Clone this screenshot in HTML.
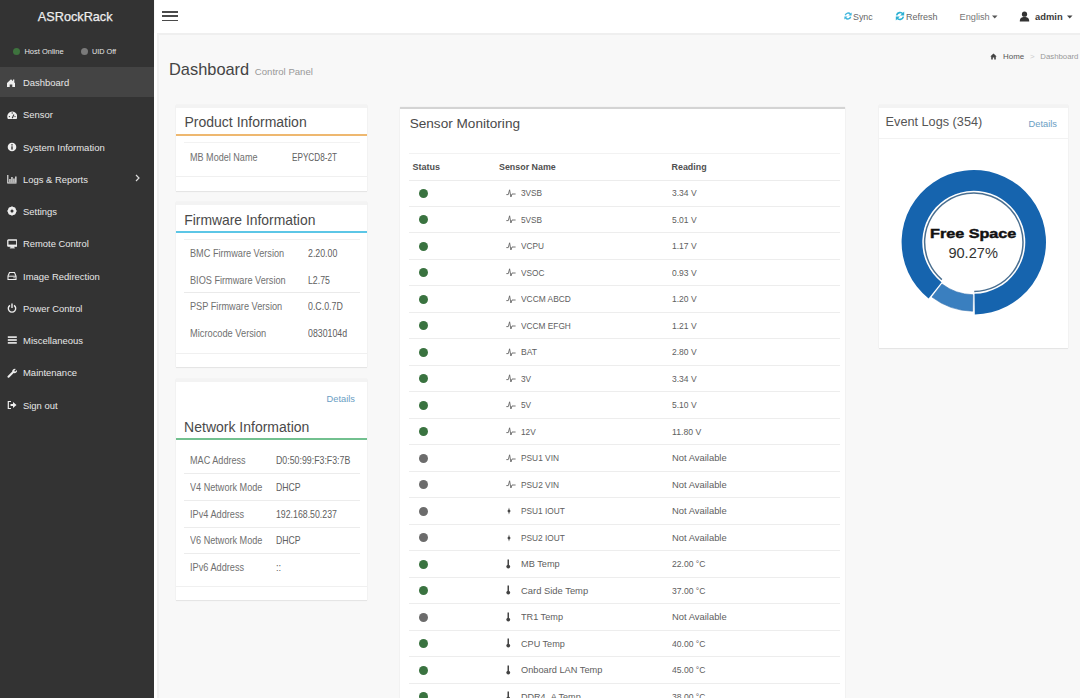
<!DOCTYPE html>
<html><head><meta charset="utf-8"><style>
html,body{margin:0;padding:0;width:1080px;height:698px;overflow:hidden;background:#f8f8f8;}
body{position:relative;font-family:"Liberation Sans",sans-serif;}
.r{position:absolute;}
.t{position:absolute;white-space:nowrap;}
.box{background:#fff;box-shadow:0 0 1px rgba(0,0,0,0.10),0 1px 1px rgba(0,0,0,0.06);box-sizing:border-box;border-top:3px solid #f3f3f3;}
</style></head><body>
<div class="r" style="left:0px;top:0px;width:154.4px;height:698px;background:#333333;"></div>
<div class="t" style="left:37.8px;top:8.20px;font-size:12.7px;line-height:19px;color:#eeeeee;font-weight:normal;-webkit-text-stroke:0.25px #eee;">ASRockRack</div>
<div class="r" style="left:13.2px;top:47.6px;width:7px;height:7px;border-radius:50%;background:#3e733e"></div>
<div class="t" style="left:24.4px;top:45.50px;font-size:7.5px;line-height:11px;color:#e6e6e6;font-weight:normal;">Host Online</div>
<div class="r" style="left:81.2px;top:47.6px;width:7px;height:7px;border-radius:50%;background:#7a7a7a"></div>
<div class="t" style="left:91.9px;top:45.50px;font-size:7.3px;line-height:11px;color:#e6e6e6;font-weight:normal;">UID Off</div>
<div class="r" style="left:0px;top:66.7px;width:154.4px;height:30.5px;background:#444444;"></div>
<div class="t" style="left:23px;top:75.00px;font-size:9.9px;line-height:15px;color:#e8e8e8;font-weight:normal;transform:scaleX(0.9567);transform-origin:0 50%;">Dashboard</div>
<svg class="r" style="left:6.0px;top:78.2px;" width="10" height="10" viewBox="0 0 10 10"><path d="M1 5 L5 1.2 L9 5 L9 9 L6.3 9 L6.3 6.5 L3.7 6.5 L3.7 9 L1 9 Z" fill="#eeeeee"/><rect x="7" y="1.5" width="1.3" height="2.5" fill="#eeeeee"/></svg>
<div class="t" style="left:23px;top:107.25px;font-size:9.9px;line-height:15px;color:#e8e8e8;font-weight:normal;transform:scaleX(0.9511);transform-origin:0 50%;">Sensor</div>
<svg class="r" style="left:6.5px;top:109.55px;" width="10" height="10" viewBox="0 0 10 10"><path d="M0.9 9 A5 5 0 1 1 9.6 9 Z" fill="#eeeeee"/><path d="M5.2 8.3 L6.9 4.6" stroke="#333333" stroke-width="1.1"/><circle cx="2.4" cy="6.6" r="0.7" fill="#333333"/><circle cx="8" cy="6.6" r="0.7" fill="#333333"/><circle cx="5.2" cy="3" r="0.7" fill="#333333"/></svg>
<div class="t" style="left:23px;top:139.50px;font-size:9.9px;line-height:15px;color:#e8e8e8;font-weight:normal;transform:scaleX(0.9601);transform-origin:0 50%;">System Information</div>
<svg class="r" style="left:6.5px;top:141.8px;" width="10" height="10" viewBox="0 0 10 10"><circle cx="5" cy="5" r="4.3" fill="#eeeeee"/><rect x="4.3" y="4.3" width="1.4" height="3.3" fill="#333333"/><rect x="4.3" y="2.2" width="1.4" height="1.3" fill="#333333"/></svg>
<div class="t" style="left:23px;top:171.75px;font-size:9.9px;line-height:15px;color:#e8e8e8;font-weight:normal;transform:scaleX(0.9533);transform-origin:0 50%;">Logs &amp; Reports</div>
<svg class="r" style="left:6.5px;top:174.05px;" width="10" height="10" viewBox="0 0 10 10"><path d="M0.8 1 V9 H9.5" stroke="#eeeeee" stroke-width="1.1" fill="none"/><rect x="2.3" y="5" width="1.3" height="3.5" fill="#eeeeee"/><rect x="4.3" y="3" width="1.3" height="5.5" fill="#eeeeee"/><rect x="6.3" y="4.5" width="1.3" height="4" fill="#eeeeee"/><rect x="8.2" y="2.5" width="1.3" height="6" fill="#eeeeee"/></svg>
<div class="t" style="left:23px;top:204.00px;font-size:9.9px;line-height:15px;color:#e8e8e8;font-weight:normal;transform:scaleX(0.9534);transform-origin:0 50%;">Settings</div>
<svg class="r" style="left:6.5px;top:206.3px;" width="10" height="10" viewBox="0 0 10 10"><circle cx="5" cy="5" r="3.3" fill="none" stroke="#eeeeee" stroke-width="2"/><path d="M5 0.5 V9.5 M0.5 5 H9.5 M1.8 1.8 L8.2 8.2 M8.2 1.8 L1.8 8.2" stroke="#eeeeee" stroke-width="1.3"/><circle cx="5" cy="5" r="1.5" fill="#333333"/></svg>
<div class="t" style="left:23px;top:236.25px;font-size:9.9px;line-height:15px;color:#e8e8e8;font-weight:normal;transform:scaleX(0.9514);transform-origin:0 50%;">Remote Control</div>
<svg class="r" style="left:6.5px;top:238.55px;" width="10" height="10" viewBox="0 0 10 10"><rect x="0.8" y="1" width="9" height="6.2" rx="0.6" fill="none" stroke="#eeeeee" stroke-width="1.3"/><rect x="0.8" y="5.6" width="9" height="1.6" fill="#eeeeee"/><rect x="3.5" y="7.2" width="3.6" height="1.6" fill="#eeeeee"/><rect x="2.8" y="8.5" width="5" height="0.9" fill="#eeeeee"/></svg>
<div class="t" style="left:23px;top:268.50px;font-size:9.9px;line-height:15px;color:#e8e8e8;font-weight:normal;transform:scaleX(0.9589);transform-origin:0 50%;">Image Redirection</div>
<svg class="r" style="left:6.5px;top:270.8px;" width="10" height="10" viewBox="0 0 10 10"><path d="M1 5 L2.5 1.5 H7.5 L9 5 V8.5 H1 Z" fill="none" stroke="#eeeeee" stroke-width="1.1"/><path d="M1 5.2 H9" stroke="#eeeeee" stroke-width="1"/><rect x="6.5" y="6.3" width="1.2" height="1" fill="#eeeeee"/></svg>
<div class="t" style="left:23px;top:300.75px;font-size:9.9px;line-height:15px;color:#e8e8e8;font-weight:normal;transform:scaleX(0.9503);transform-origin:0 50%;">Power Control</div>
<svg class="r" style="left:6.5px;top:303.05px;" width="10" height="10" viewBox="0 0 10 10"><path d="M3 2.3 A3.7 3.7 0 1 0 7 2.3" fill="none" stroke="#eeeeee" stroke-width="1.4"/><path d="M5 0.5 V5" stroke="#eeeeee" stroke-width="1.4"/></svg>
<div class="t" style="left:23px;top:333.00px;font-size:9.9px;line-height:15px;color:#e8e8e8;font-weight:normal;transform:scaleX(0.9582);transform-origin:0 50%;">Miscellaneous</div>
<svg class="r" style="left:6.5px;top:335.3px;" width="10" height="10" viewBox="0 0 10 10"><rect x="0.8" y="1.3" width="9" height="1.6" fill="#eeeeee"/><rect x="0.8" y="4.2" width="9" height="1.6" fill="#eeeeee"/><rect x="0.8" y="7.1" width="9" height="1.6" fill="#eeeeee"/></svg>
<div class="t" style="left:23px;top:365.25px;font-size:9.9px;line-height:15px;color:#e8e8e8;font-weight:normal;transform:scaleX(0.9569);transform-origin:0 50%;">Maintenance</div>
<svg class="r" style="left:6.5px;top:367.55px;" width="10" height="10" viewBox="0 0 10 10"><path d="M1.5 8.8 L6 4.3" stroke="#eeeeee" stroke-width="2" stroke-linecap="round"/><path d="M5.2 3.5 A2.6 2.6 0 0 1 8.9 1 L7.4 2.6 L7.6 3.4 L8.4 3.6 L10 2 A2.6 2.6 0 0 1 6.6 5" fill="#eeeeee"/></svg>
<div class="t" style="left:23px;top:397.50px;font-size:9.9px;line-height:15px;color:#e8e8e8;font-weight:normal;transform:scaleX(0.9536);transform-origin:0 50%;">Sign out</div>
<svg class="r" style="left:6.5px;top:399.8px;" width="10" height="10" viewBox="0 0 10 10"><path d="M4 1.5 H1.3 V8.5 H4" fill="none" stroke="#eeeeee" stroke-width="1.2"/><path d="M3.5 4 H6 V2 L9.5 5 L6 8 V6 H3.5 Z" fill="#eeeeee"/></svg>
<svg class="r" style="left:134.5px;top:173.5px;" width="5" height="8" viewBox="0 0 5 8"><path d="M1 1 L4 4 L1 7" stroke="#dddddd" stroke-width="1.2" fill="none"/></svg>
<div class="r" style="left:154.5px;top:0px;width:925.5px;height:33px;background:#ffffff;"></div>
<div class="r" style="left:154.5px;top:33px;width:925.5px;height:1.5px;background:#efefef;"></div>
<div class="r" style="left:154.4px;top:33px;width:3.0px;height:665px;background:#ffffff;"></div>
<div class="r" style="left:157.4px;top:34px;width:1.2px;height:664px;background:#f1f1f1;"></div>
<div class="r" style="left:162px;top:11.0px;width:16px;height:1.7px;background:#4a4a4a;"></div>
<div class="r" style="left:162px;top:15.25px;width:16px;height:1.7px;background:#4a4a4a;"></div>
<div class="r" style="left:162px;top:19.5px;width:16px;height:1.7px;background:#4a4a4a;"></div>
<svg class="r" style="left:844.2px;top:12.3px;" width="8" height="8" viewBox="0 0 8 8"><path d="M1.3 3.2 A3 3 0 0 1 6.4 2" stroke="#3fb5dc" stroke-width="1.4" fill="none"/><path d="M6.7 4.8 A3 3 0 0 1 1.6 6" stroke="#3fb5dc" stroke-width="1.4" fill="none"/><path d="M7.6 0.4 V3.6 H4.4 Z" fill="#3fb5dc"/><path d="M0.4 7.6 V4.4 H3.6 Z" fill="#3fb5dc"/></svg>
<div class="t" style="left:853px;top:10.70px;font-size:8.9px;line-height:13px;color:#666;font-weight:normal;">Sync</div>
<svg class="r" style="left:894.8px;top:11.2px;" width="10" height="10" viewBox="0 0 10 10"><path d="M1.6 4.3 A3.5 3.5 0 0 1 8 3.2" stroke="#2bb0d3" stroke-width="1.6" fill="none"/><path d="M8.4 5.7 A3.5 3.5 0 0 1 2 6.8" stroke="#2bb0d3" stroke-width="1.6" fill="none"/><path d="M9.2 0.5 V4.6 H5.1 Z" fill="#2bb0d3"/><path d="M0.8 9.5 V5.4 H4.9 Z" fill="#2bb0d3"/></svg>
<div class="t" style="left:906px;top:10.00px;font-size:9.0px;line-height:14px;color:#666;font-weight:normal;">Refresh</div>
<div class="t" style="left:959.6px;top:9.50px;font-size:9.2px;line-height:14px;color:#777;font-weight:normal;">English</div>
<svg class="r" style="left:992px;top:14.5px;" width="5.5" height="4" viewBox="0 0 5.5 4"><path d="M0 0.5 H5.5 L2.75 3.5 Z" fill="#555"/></svg>
<svg class="r" style="left:1018.7px;top:10.5px;" width="11" height="11" viewBox="0 0 11 11"><circle cx="5.5" cy="3.2" r="2.6" fill="#333"/><path d="M0.8 10.5 C0.8 7 2.5 6 5.5 6 C8.5 6 10.2 7 10.2 10.5 Z" fill="#333"/></svg>
<div class="t" style="left:1035px;top:9.50px;font-size:9.4px;line-height:14px;color:#3a3a3a;font-weight:bold;">admin</div>
<svg class="r" style="left:1067px;top:14.5px;" width="5.5" height="4" viewBox="0 0 5.5 4"><path d="M0 0.5 H5.5 L2.75 3.5 Z" fill="#444"/></svg>
<div class="t" style="left:169px;top:57.10px;font-size:16.4px;line-height:25px;color:#444;font-weight:normal;">Dashboard</div>
<div class="t" style="left:254.8px;top:65.10px;font-size:9.6px;line-height:14px;color:#999;font-weight:normal;">Control Panel</div>
<svg class="r" style="left:989.9px;top:53px;" width="7" height="7" viewBox="0 0 7 7"><path d="M0.3 3.6 L3.5 0.6 L6.7 3.6 L5.8 3.6 L5.8 6.6 L4.2 6.6 L4.2 4.6 L2.8 4.6 L2.8 6.6 L1.2 6.6 L1.2 3.6 Z" fill="#444"/></svg>
<div class="t" style="left:1003.1px;top:50.80px;font-size:7.9px;line-height:12px;color:#555;font-weight:normal;">Home</div>
<div class="t" style="left:1030px;top:50.80px;font-size:7.9px;line-height:12px;color:#ccc;font-weight:normal;">&gt;</div>
<div class="t" style="left:1040.3px;top:50.80px;font-size:7.8px;line-height:12px;color:#999;font-weight:normal;">Dashboard</div>
<div class="r box" style="left:176px;top:105px;width:190.5px;height:86px;"></div>
<div class="t" style="left:184.5px;top:112.20px;font-size:14px;line-height:21px;color:#4a4a4a;font-weight:normal;">Product Information</div>
<div class="r" style="left:176px;top:133.5px;width:190.5px;height:2px;background:#eeb870;"></div>
<div class="r" style="left:184px;top:142px;width:175.5px;height:1px;background:#f2f2f2;"></div>
<div class="t" style="left:189.7px;top:149.50px;font-size:10.2px;line-height:15px;color:#707070;font-weight:normal;transform:scaleX(0.8896);transform-origin:0 50%;">MB Model Name</div>
<div class="t" style="left:292px;top:149.50px;font-size:10.2px;line-height:15px;color:#606060;font-weight:normal;transform:scaleX(0.8030);transform-origin:0 50%;">EPYCD8-2T</div>
<div class="r" style="left:176px;top:176px;width:190.5px;height:1px;background:#f0f0f0;"></div>
<div class="r box" style="left:176px;top:202px;width:190.5px;height:165px;"></div>
<div class="t" style="left:184.2px;top:210.00px;font-size:13.9px;line-height:21px;color:#4a4a4a;font-weight:normal;">Firmware Information</div>
<div class="r" style="left:176px;top:231px;width:190.5px;height:2px;background:#5cc6e6;"></div>
<div class="r" style="left:184px;top:239px;width:175.5px;height:1px;background:#f0f0f0;"></div>
<div class="t" style="left:189.7px;top:246.20px;font-size:10.2px;line-height:15px;color:#707070;font-weight:normal;transform:scaleX(0.8988);transform-origin:0 50%;">BMC Firmware Version</div>
<div class="t" style="left:308px;top:246.20px;font-size:10.2px;line-height:15px;color:#606060;font-weight:normal;transform:scaleX(0.8633);transform-origin:0 50%;">2.20.00</div>
<div class="t" style="left:189.7px;top:272.70px;font-size:10.2px;line-height:15px;color:#707070;font-weight:normal;transform:scaleX(0.8981);transform-origin:0 50%;">BIOS Firmware Version</div>
<div class="t" style="left:308px;top:272.70px;font-size:10.2px;line-height:15px;color:#606060;font-weight:normal;transform:scaleX(0.8599);transform-origin:0 50%;">L2.75</div>
<div class="t" style="left:189.7px;top:299.20px;font-size:10.2px;line-height:15px;color:#707070;font-weight:normal;transform:scaleX(0.9014);transform-origin:0 50%;">PSP Firmware Version</div>
<div class="t" style="left:308px;top:299.20px;font-size:10.2px;line-height:15px;color:#606060;font-weight:normal;transform:scaleX(0.8661);transform-origin:0 50%;">0.C.0.7D</div>
<div class="t" style="left:189.7px;top:325.70px;font-size:10.2px;line-height:15px;color:#707070;font-weight:normal;transform:scaleX(0.9098);transform-origin:0 50%;">Microcode Version</div>
<div class="t" style="left:308px;top:325.70px;font-size:10.2px;line-height:15px;color:#606060;font-weight:normal;transform:scaleX(0.8607);transform-origin:0 50%;">0830104d</div>
<div class="r" style="left:184px;top:292px;width:175.5px;height:1px;background:#eaeaea;"></div>
<div class="r" style="left:176px;top:353px;width:190.5px;height:1px;background:#f0f0f0;"></div>
<div class="r box" style="left:176px;top:379px;width:190.5px;height:221px;"></div>
<div class="t" style="left:326.5px;top:391.60px;font-size:9.3px;line-height:14px;color:#6a9ec4;font-weight:normal;">Details</div>
<div class="t" style="left:184.1px;top:416.80px;font-size:14px;line-height:21px;color:#4a4a4a;font-weight:normal;">Network Information</div>
<div class="r" style="left:176px;top:437.5px;width:190.5px;height:2px;background:#72c08f;"></div>
<div class="t" style="left:189.5px;top:453.30px;font-size:10.2px;line-height:15px;color:#707070;font-weight:normal;transform:scaleX(0.8940);transform-origin:0 50%;">MAC Address</div>
<div class="t" style="left:276.4px;top:453.30px;font-size:10.2px;line-height:15px;color:#606060;font-weight:normal;transform:scaleX(0.8632);transform-origin:0 50%;">D0:50:99:F3:F3:7B</div>
<div class="t" style="left:189.5px;top:479.90px;font-size:10.2px;line-height:15px;color:#707070;font-weight:normal;transform:scaleX(0.8933);transform-origin:0 50%;">V4 Network Mode</div>
<div class="t" style="left:276.4px;top:479.90px;font-size:10.2px;line-height:15px;color:#606060;font-weight:normal;transform:scaleX(0.8530);transform-origin:0 50%;">DHCP</div>
<div class="r" style="left:184px;top:473px;width:175.5px;height:1px;background:#ececec;"></div>
<div class="t" style="left:189.5px;top:506.50px;font-size:10.2px;line-height:15px;color:#707070;font-weight:normal;transform:scaleX(0.9008);transform-origin:0 50%;">IPv4 Address</div>
<div class="t" style="left:276.4px;top:506.50px;font-size:10.2px;line-height:15px;color:#606060;font-weight:normal;transform:scaleX(0.8604);transform-origin:0 50%;">192.168.50.237</div>
<div class="r" style="left:184px;top:500px;width:175.5px;height:1px;background:#ececec;"></div>
<div class="t" style="left:189.5px;top:533.10px;font-size:10.2px;line-height:15px;color:#707070;font-weight:normal;transform:scaleX(0.8933);transform-origin:0 50%;">V6 Network Mode</div>
<div class="t" style="left:276.4px;top:533.10px;font-size:10.2px;line-height:15px;color:#606060;font-weight:normal;transform:scaleX(0.8530);transform-origin:0 50%;">DHCP</div>
<div class="r" style="left:184px;top:527px;width:175.5px;height:1px;background:#ececec;"></div>
<div class="t" style="left:189.5px;top:559.70px;font-size:10.2px;line-height:15px;color:#707070;font-weight:normal;transform:scaleX(0.9008);transform-origin:0 50%;">IPv6 Address</div>
<div class="t" style="left:276.4px;top:559.70px;font-size:10.2px;line-height:15px;color:#606060;font-weight:normal;transform:scaleX(0.9150);transform-origin:0 50%;">::</div>
<div class="r" style="left:184px;top:553px;width:175.5px;height:1px;background:#ececec;"></div>
<div class="r" style="left:176px;top:586px;width:190.5px;height:1px;background:#f0f0f0;"></div>
<div class="r box" style="left:399.7px;top:107px;width:445.3px;height:600px;border-top:2px solid #d4d4d4;"></div>
<div class="t" style="left:409.7px;top:114.00px;font-size:13.6px;line-height:20px;color:#4a4a4a;font-weight:normal;">Sensor Monitoring</div>
<div class="r" style="left:409px;top:153px;width:431px;height:1px;background:#f2f2f2;"></div>
<div class="t" style="left:412.4px;top:160.00px;font-size:9.0px;line-height:14px;color:#505050;font-weight:bold;">Status</div>
<div class="t" style="left:499px;top:160.50px;font-size:8.9px;line-height:13px;color:#505050;font-weight:bold;">Sensor Name</div>
<div class="t" style="left:671.6px;top:160.50px;font-size:8.9px;line-height:13px;color:#505050;font-weight:bold;">Reading</div>
<div class="r" style="left:409px;top:179.5px;width:431px;height:1.5px;background:#ececec;"></div>
<div class="r" style="left:419.3px;top:188.70px;width:9.2px;height:9.2px;border-radius:50%;background:#3a7340"></div>
<svg class="r" style="left:505.8px;top:188.8px;" width="10" height="9" viewBox="0 0 10 9"><path d="M0.3 5.6 H2.3 L3.6 0.8 L4.9 8 L6 5 H9.6" stroke="#666" stroke-width="0.9" fill="none" stroke-linejoin="round"/></svg>
<div class="t" style="left:520.8px;top:186.30px;font-size:9.6px;line-height:14px;color:#606060;font-weight:normal;transform:scaleX(0.8600);transform-origin:0 50%;">3VSB</div>
<div class="t" style="left:671.6px;top:186.30px;font-size:9.6px;line-height:14px;color:#606060;font-weight:normal;transform:scaleX(0.8869);transform-origin:0 50%;">3.34 V</div>
<div class="r" style="left:409px;top:206px;width:431px;height:1px;background:#ededed;"></div>
<div class="r" style="left:419.3px;top:215.20px;width:9.2px;height:9.2px;border-radius:50%;background:#3a7340"></div>
<svg class="r" style="left:505.8px;top:215.3px;" width="10" height="9" viewBox="0 0 10 9"><path d="M0.3 5.6 H2.3 L3.6 0.8 L4.9 8 L6 5 H9.6" stroke="#666" stroke-width="0.9" fill="none" stroke-linejoin="round"/></svg>
<div class="t" style="left:520.8px;top:212.80px;font-size:9.6px;line-height:14px;color:#606060;font-weight:normal;transform:scaleX(0.8600);transform-origin:0 50%;">5VSB</div>
<div class="t" style="left:671.6px;top:212.80px;font-size:9.6px;line-height:14px;color:#606060;font-weight:normal;transform:scaleX(0.8869);transform-origin:0 50%;">5.01 V</div>
<div class="r" style="left:409px;top:232px;width:431px;height:1px;background:#ededed;"></div>
<div class="r" style="left:419.3px;top:241.70px;width:9.2px;height:9.2px;border-radius:50%;background:#3a7340"></div>
<svg class="r" style="left:505.8px;top:241.8px;" width="10" height="9" viewBox="0 0 10 9"><path d="M0.3 5.6 H2.3 L3.6 0.8 L4.9 8 L6 5 H9.6" stroke="#666" stroke-width="0.9" fill="none" stroke-linejoin="round"/></svg>
<div class="t" style="left:520.8px;top:239.30px;font-size:9.6px;line-height:14px;color:#606060;font-weight:normal;transform:scaleX(0.8600);transform-origin:0 50%;">VCPU</div>
<div class="t" style="left:671.6px;top:239.30px;font-size:9.6px;line-height:14px;color:#606060;font-weight:normal;transform:scaleX(0.8869);transform-origin:0 50%;">1.17 V</div>
<div class="r" style="left:409px;top:259px;width:431px;height:1px;background:#ededed;"></div>
<div class="r" style="left:419.3px;top:268.20px;width:9.2px;height:9.2px;border-radius:50%;background:#3a7340"></div>
<svg class="r" style="left:505.8px;top:268.3px;" width="10" height="9" viewBox="0 0 10 9"><path d="M0.3 5.6 H2.3 L3.6 0.8 L4.9 8 L6 5 H9.6" stroke="#666" stroke-width="0.9" fill="none" stroke-linejoin="round"/></svg>
<div class="t" style="left:520.8px;top:265.80px;font-size:9.6px;line-height:14px;color:#606060;font-weight:normal;transform:scaleX(0.8600);transform-origin:0 50%;">VSOC</div>
<div class="t" style="left:671.6px;top:265.80px;font-size:9.6px;line-height:14px;color:#606060;font-weight:normal;transform:scaleX(0.8869);transform-origin:0 50%;">0.93 V</div>
<div class="r" style="left:409px;top:285px;width:431px;height:1px;background:#ededed;"></div>
<div class="r" style="left:419.3px;top:294.70px;width:9.2px;height:9.2px;border-radius:50%;background:#3a7340"></div>
<svg class="r" style="left:505.8px;top:294.8px;" width="10" height="9" viewBox="0 0 10 9"><path d="M0.3 5.6 H2.3 L3.6 0.8 L4.9 8 L6 5 H9.6" stroke="#666" stroke-width="0.9" fill="none" stroke-linejoin="round"/></svg>
<div class="t" style="left:520.8px;top:292.30px;font-size:9.6px;line-height:14px;color:#606060;font-weight:normal;transform:scaleX(0.8745);transform-origin:0 50%;">VCCM ABCD</div>
<div class="t" style="left:671.6px;top:292.30px;font-size:9.6px;line-height:14px;color:#606060;font-weight:normal;transform:scaleX(0.8869);transform-origin:0 50%;">1.20 V</div>
<div class="r" style="left:409px;top:312px;width:431px;height:1px;background:#ededed;"></div>
<div class="r" style="left:419.3px;top:321.20px;width:9.2px;height:9.2px;border-radius:50%;background:#3a7340"></div>
<svg class="r" style="left:505.8px;top:321.3px;" width="10" height="9" viewBox="0 0 10 9"><path d="M0.3 5.6 H2.3 L3.6 0.8 L4.9 8 L6 5 H9.6" stroke="#666" stroke-width="0.9" fill="none" stroke-linejoin="round"/></svg>
<div class="t" style="left:520.8px;top:318.80px;font-size:9.6px;line-height:14px;color:#606060;font-weight:normal;transform:scaleX(0.8665);transform-origin:0 50%;">VCCM EFGH</div>
<div class="t" style="left:671.6px;top:318.80px;font-size:9.6px;line-height:14px;color:#606060;font-weight:normal;transform:scaleX(0.8869);transform-origin:0 50%;">1.21 V</div>
<div class="r" style="left:409px;top:338px;width:431px;height:1px;background:#ededed;"></div>
<div class="r" style="left:419.3px;top:347.70px;width:9.2px;height:9.2px;border-radius:50%;background:#3a7340"></div>
<svg class="r" style="left:505.8px;top:347.8px;" width="10" height="9" viewBox="0 0 10 9"><path d="M0.3 5.6 H2.3 L3.6 0.8 L4.9 8 L6 5 H9.6" stroke="#666" stroke-width="0.9" fill="none" stroke-linejoin="round"/></svg>
<div class="t" style="left:520.8px;top:345.30px;font-size:9.6px;line-height:14px;color:#606060;font-weight:normal;transform:scaleX(0.8941);transform-origin:0 50%;">BAT</div>
<div class="t" style="left:671.6px;top:345.30px;font-size:9.6px;line-height:14px;color:#606060;font-weight:normal;transform:scaleX(0.8869);transform-origin:0 50%;">2.80 V</div>
<div class="r" style="left:409px;top:365px;width:431px;height:1px;background:#ededed;"></div>
<div class="r" style="left:419.3px;top:374.20px;width:9.2px;height:9.2px;border-radius:50%;background:#3a7340"></div>
<svg class="r" style="left:505.8px;top:374.3px;" width="10" height="9" viewBox="0 0 10 9"><path d="M0.3 5.6 H2.3 L3.6 0.8 L4.9 8 L6 5 H9.6" stroke="#666" stroke-width="0.9" fill="none" stroke-linejoin="round"/></svg>
<div class="t" style="left:520.8px;top:371.80px;font-size:9.6px;line-height:14px;color:#606060;font-weight:normal;transform:scaleX(0.8600);transform-origin:0 50%;">3V</div>
<div class="t" style="left:671.6px;top:371.80px;font-size:9.6px;line-height:14px;color:#606060;font-weight:normal;transform:scaleX(0.8869);transform-origin:0 50%;">3.34 V</div>
<div class="r" style="left:409px;top:391px;width:431px;height:1px;background:#ededed;"></div>
<div class="r" style="left:419.3px;top:400.70px;width:9.2px;height:9.2px;border-radius:50%;background:#3a7340"></div>
<svg class="r" style="left:505.8px;top:400.8px;" width="10" height="9" viewBox="0 0 10 9"><path d="M0.3 5.6 H2.3 L3.6 0.8 L4.9 8 L6 5 H9.6" stroke="#666" stroke-width="0.9" fill="none" stroke-linejoin="round"/></svg>
<div class="t" style="left:520.8px;top:398.30px;font-size:9.6px;line-height:14px;color:#606060;font-weight:normal;transform:scaleX(0.8600);transform-origin:0 50%;">5V</div>
<div class="t" style="left:671.6px;top:398.30px;font-size:9.6px;line-height:14px;color:#606060;font-weight:normal;transform:scaleX(0.8869);transform-origin:0 50%;">5.10 V</div>
<div class="r" style="left:409px;top:418px;width:431px;height:1px;background:#ededed;"></div>
<div class="r" style="left:419.3px;top:427.20px;width:9.2px;height:9.2px;border-radius:50%;background:#3a7340"></div>
<svg class="r" style="left:505.8px;top:427.3px;" width="10" height="9" viewBox="0 0 10 9"><path d="M0.3 5.6 H2.3 L3.6 0.8 L4.9 8 L6 5 H9.6" stroke="#666" stroke-width="0.9" fill="none" stroke-linejoin="round"/></svg>
<div class="t" style="left:520.8px;top:424.80px;font-size:9.6px;line-height:14px;color:#606060;font-weight:normal;transform:scaleX(0.8600);transform-origin:0 50%;">12V</div>
<div class="t" style="left:671.6px;top:424.80px;font-size:9.6px;line-height:14px;color:#606060;font-weight:normal;transform:scaleX(0.9020);transform-origin:0 50%;">11.80 V</div>
<div class="r" style="left:409px;top:444px;width:431px;height:1px;background:#ededed;"></div>
<div class="r" style="left:419.3px;top:453.70px;width:9.2px;height:9.2px;border-radius:50%;background:#6c6c6c"></div>
<svg class="r" style="left:505.8px;top:453.8px;" width="10" height="9" viewBox="0 0 10 9"><path d="M0.3 5.6 H2.3 L3.6 0.8 L4.9 8 L6 5 H9.6" stroke="#666" stroke-width="0.9" fill="none" stroke-linejoin="round"/></svg>
<div class="t" style="left:520.8px;top:451.30px;font-size:9.6px;line-height:14px;color:#606060;font-weight:normal;transform:scaleX(0.8685);transform-origin:0 50%;">PSU1 VIN</div>
<div class="t" style="left:671.6px;top:451.30px;font-size:9.6px;line-height:14px;color:#606060;font-weight:normal;transform:scaleX(0.9792);transform-origin:0 50%;">Not Available</div>
<div class="r" style="left:409px;top:471px;width:431px;height:1px;background:#ededed;"></div>
<div class="r" style="left:419.3px;top:480.20px;width:9.2px;height:9.2px;border-radius:50%;background:#6c6c6c"></div>
<svg class="r" style="left:505.8px;top:480.3px;" width="10" height="9" viewBox="0 0 10 9"><path d="M0.3 5.6 H2.3 L3.6 0.8 L4.9 8 L6 5 H9.6" stroke="#666" stroke-width="0.9" fill="none" stroke-linejoin="round"/></svg>
<div class="t" style="left:520.8px;top:477.80px;font-size:9.6px;line-height:14px;color:#606060;font-weight:normal;transform:scaleX(0.8685);transform-origin:0 50%;">PSU2 VIN</div>
<div class="t" style="left:671.6px;top:477.80px;font-size:9.6px;line-height:14px;color:#606060;font-weight:normal;transform:scaleX(0.9792);transform-origin:0 50%;">Not Available</div>
<div class="r" style="left:409px;top:497px;width:431px;height:1px;background:#ededed;"></div>
<div class="r" style="left:419.3px;top:506.70px;width:9.2px;height:9.2px;border-radius:50%;background:#6c6c6c"></div>
<svg class="r" style="left:506.6px;top:507.0px;" width="4" height="8" viewBox="0 0 4 8"><path d="M2 0.6 L2.7 3.3 L3.9 4 L2.7 4.7 L2 7.4 L1.3 4.7 L0.1 4 L1.3 3.3 Z" fill="#333"/></svg>
<div class="t" style="left:520.8px;top:504.30px;font-size:9.6px;line-height:14px;color:#606060;font-weight:normal;transform:scaleX(0.8674);transform-origin:0 50%;">PSU1 IOUT</div>
<div class="t" style="left:671.6px;top:504.30px;font-size:9.6px;line-height:14px;color:#606060;font-weight:normal;transform:scaleX(0.9792);transform-origin:0 50%;">Not Available</div>
<div class="r" style="left:409px;top:524px;width:431px;height:1px;background:#ededed;"></div>
<div class="r" style="left:419.3px;top:533.20px;width:9.2px;height:9.2px;border-radius:50%;background:#6c6c6c"></div>
<svg class="r" style="left:506.6px;top:533.5px;" width="4" height="8" viewBox="0 0 4 8"><path d="M2 0.6 L2.7 3.3 L3.9 4 L2.7 4.7 L2 7.4 L1.3 4.7 L0.1 4 L1.3 3.3 Z" fill="#333"/></svg>
<div class="t" style="left:520.8px;top:530.80px;font-size:9.6px;line-height:14px;color:#606060;font-weight:normal;transform:scaleX(0.8674);transform-origin:0 50%;">PSU2 IOUT</div>
<div class="t" style="left:671.6px;top:530.80px;font-size:9.6px;line-height:14px;color:#606060;font-weight:normal;transform:scaleX(0.9792);transform-origin:0 50%;">Not Available</div>
<div class="r" style="left:409px;top:550px;width:431px;height:1px;background:#ededed;"></div>
<div class="r" style="left:419.3px;top:559.70px;width:9.2px;height:9.2px;border-radius:50%;background:#3a7340"></div>
<svg class="r" style="left:506.2px;top:558.8px;" width="4.5" height="10" viewBox="0 0 4.5 10"><rect x="1.5" y="0.5" width="1.5" height="6.5" fill="#444"/><circle cx="2.25" cy="7.6" r="1.9" fill="#444"/></svg>
<div class="t" style="left:520.8px;top:557.30px;font-size:9.6px;line-height:14px;color:#606060;font-weight:normal;transform:scaleX(0.9604);transform-origin:0 50%;">MB Temp</div>
<div class="t" style="left:671.6px;top:557.30px;font-size:9.6px;line-height:14px;color:#606060;font-weight:normal;transform:scaleX(0.8943);transform-origin:0 50%;">22.00 °C</div>
<div class="r" style="left:409px;top:577px;width:431px;height:1px;background:#ededed;"></div>
<div class="r" style="left:419.3px;top:586.20px;width:9.2px;height:9.2px;border-radius:50%;background:#3a7340"></div>
<svg class="r" style="left:506.2px;top:585.3px;" width="4.5" height="10" viewBox="0 0 4.5 10"><rect x="1.5" y="0.5" width="1.5" height="6.5" fill="#444"/><circle cx="2.25" cy="7.6" r="1.9" fill="#444"/></svg>
<div class="t" style="left:520.8px;top:583.80px;font-size:9.6px;line-height:14px;color:#606060;font-weight:normal;transform:scaleX(0.9789);transform-origin:0 50%;">Card Side Temp</div>
<div class="t" style="left:671.6px;top:583.80px;font-size:9.6px;line-height:14px;color:#606060;font-weight:normal;transform:scaleX(0.8943);transform-origin:0 50%;">37.00 °C</div>
<div class="r" style="left:409px;top:603px;width:431px;height:1px;background:#ededed;"></div>
<div class="r" style="left:419.3px;top:612.70px;width:9.2px;height:9.2px;border-radius:50%;background:#6c6c6c"></div>
<svg class="r" style="left:506.2px;top:611.8px;" width="4.5" height="10" viewBox="0 0 4.5 10"><rect x="1.5" y="0.5" width="1.5" height="6.5" fill="#444"/><circle cx="2.25" cy="7.6" r="1.9" fill="#444"/></svg>
<div class="t" style="left:520.8px;top:610.30px;font-size:9.6px;line-height:14px;color:#606060;font-weight:normal;transform:scaleX(0.9519);transform-origin:0 50%;">TR1 Temp</div>
<div class="t" style="left:671.6px;top:610.30px;font-size:9.6px;line-height:14px;color:#606060;font-weight:normal;transform:scaleX(0.9792);transform-origin:0 50%;">Not Available</div>
<div class="r" style="left:409px;top:630px;width:431px;height:1px;background:#ededed;"></div>
<div class="r" style="left:419.3px;top:639.20px;width:9.2px;height:9.2px;border-radius:50%;background:#3a7340"></div>
<svg class="r" style="left:506.2px;top:638.3px;" width="4.5" height="10" viewBox="0 0 4.5 10"><rect x="1.5" y="0.5" width="1.5" height="6.5" fill="#444"/><circle cx="2.25" cy="7.6" r="1.9" fill="#444"/></svg>
<div class="t" style="left:520.8px;top:636.80px;font-size:9.6px;line-height:14px;color:#606060;font-weight:normal;transform:scaleX(0.9476);transform-origin:0 50%;">CPU Temp</div>
<div class="t" style="left:671.6px;top:636.80px;font-size:9.6px;line-height:14px;color:#606060;font-weight:normal;transform:scaleX(0.8943);transform-origin:0 50%;">40.00 °C</div>
<div class="r" style="left:409px;top:656px;width:431px;height:1px;background:#ededed;"></div>
<div class="r" style="left:419.3px;top:665.70px;width:9.2px;height:9.2px;border-radius:50%;background:#3a7340"></div>
<svg class="r" style="left:506.2px;top:664.8px;" width="4.5" height="10" viewBox="0 0 4.5 10"><rect x="1.5" y="0.5" width="1.5" height="6.5" fill="#444"/><circle cx="2.25" cy="7.6" r="1.9" fill="#444"/></svg>
<div class="t" style="left:520.8px;top:663.30px;font-size:9.6px;line-height:14px;color:#606060;font-weight:normal;transform:scaleX(0.9617);transform-origin:0 50%;">Onboard LAN Temp</div>
<div class="t" style="left:671.6px;top:663.30px;font-size:9.6px;line-height:14px;color:#606060;font-weight:normal;transform:scaleX(0.8943);transform-origin:0 50%;">45.00 °C</div>
<div class="r" style="left:409px;top:683px;width:431px;height:1px;background:#ededed;"></div>
<div class="r" style="left:419.3px;top:692.20px;width:9.2px;height:9.2px;border-radius:50%;background:#3a7340"></div>
<svg class="r" style="left:506.2px;top:691.3px;" width="4.5" height="10" viewBox="0 0 4.5 10"><rect x="1.5" y="0.5" width="1.5" height="6.5" fill="#444"/><circle cx="2.25" cy="7.6" r="1.9" fill="#444"/></svg>
<div class="t" style="left:520.8px;top:689.80px;font-size:9.6px;line-height:14px;color:#606060;font-weight:normal;transform:scaleX(0.9430);transform-origin:0 50%;">DDR4_A Temp</div>
<div class="t" style="left:671.6px;top:689.80px;font-size:9.6px;line-height:14px;color:#606060;font-weight:normal;transform:scaleX(0.8943);transform-origin:0 50%;">38.00 °C</div>
<div class="r box" style="left:878.8px;top:105px;width:189.2px;height:242.5px;"></div>
<div class="t" style="left:885.6px;top:113.20px;font-size:12.7px;line-height:19px;color:#555;font-weight:normal;">Event Logs (354)</div>
<div class="t" style="left:1028.5px;top:117.00px;font-size:9.3px;line-height:14px;color:#6a9ec4;font-weight:normal;">Details</div>
<div class="r" style="left:878.8px;top:138px;width:189.2px;height:1px;background:#f2f2f2;"></div>
<svg class="r" style="left:0;top:0" width="1080" height="698" viewBox="0 0 1080 698"><path d="M928.56 298.47 A72.2 72.2 0 1 1 974.81 314.39 L974.52 293.69 A51.5 51.5 0 1 0 941.53 282.34 Z" fill="#1664ae"/><path d="M972.60 311.19 A69 69 0 0 1 931.99 297.09 L941.99 283.96 A52.5 52.5 0 0 0 972.88 294.69 Z" fill="#3a7fbf" stroke="#2f6fae" stroke-width="0.6"/><path d="M941.85 279.61 A49.2 49.2 0 1 1 974.23 291.40" fill="none" stroke="#4a6f90" stroke-width="1.5"/></svg>
<div class="t" style="left:930.1px;top:224.20px;font-size:13px;line-height:20px;color:#111;font-weight:bold;transform:scaleX(1.245);transform-origin:0 50%;-webkit-text-stroke:0.45px #111;">Free Space</div>
<div class="t" style="left:948.4px;top:242.30px;font-size:14.6px;line-height:22px;color:#333;font-weight:normal;">90.27%</div>
</body></html>
